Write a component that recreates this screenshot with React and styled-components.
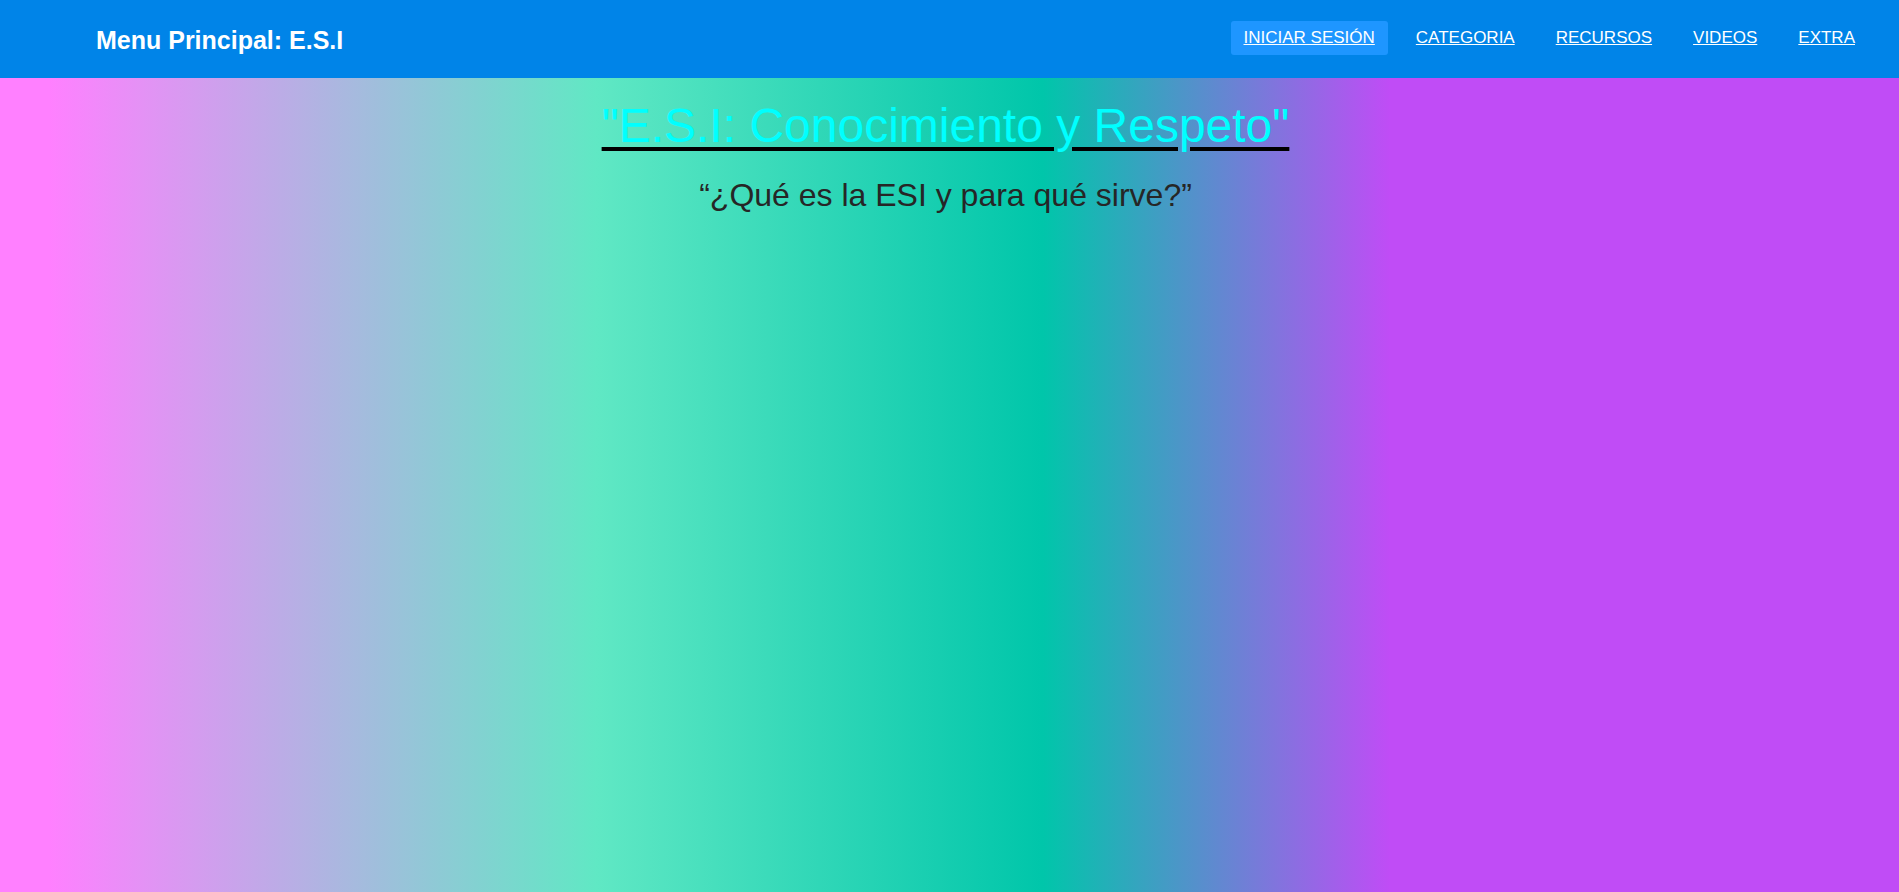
import React from "react";
import styled, { createGlobalStyle } from "styled-components";

const GlobalStyle = createGlobalStyle`
  html, body {
    margin: 0;
    padding: 0;
  }
  html {
    overflow-y: scroll;
  }
  body {
    font-family: "Liberation Sans", Arial, sans-serif;
    background: linear-gradient(
      to right,
      #ff80ff 0%,
      #ff80ff 2.6%,
      #60e8c4 31.4%,
      #00c6aa 54.9%,
      #c04cf6 73.2%,
      #c04cf6 100%
    );
    background-attachment: fixed;
  }
  ::-webkit-scrollbar {
    width: 6px;
  }
  ::-webkit-scrollbar-track {
    background: #fbfbfb;
  }
  ::-webkit-scrollbar-thumb {
    background: #8e8e8e;
    border-radius: 3px;
  }
`;

const links = ["Iniciar sesión", "Categoria", "Recursos", "Videos", "Extra"];

const Header = styled.header`
  height: 78px;
  background: #0084e8;
  display: flex;
  align-items: center;
  justify-content: space-between;
  padding: 0 31px 0 96px;
  box-sizing: border-box;
`;

const Brand = styled.h2`
  margin: 2px 0 0;
  color: #fff;
  font-size: 25px;
  font-weight: bold;
`;

const Nav = styled.nav`
  display: flex;
  align-items: center;
  gap: 15px;
  margin-top: -3px;
`;

const NavLink = styled.a`
  color: #fff;
  font-size: 17px;
  text-transform: uppercase;
  text-decoration: underline;
  padding: 7px 13px;
  border-radius: 3px;
  background: ${({ $active }) => ($active ? "#1e96ff" : "transparent")};
`;

const Main = styled.main`
  min-height: 9000px;
  padding-right: 8px;
  text-align: center;
`;

const Title = styled.h1`
  margin: 20px 0 0;
  font-size: 48px;
  font-weight: normal;
  line-height: normal;
`;

const TitleLink = styled.a`
  color: #00ffff;
  text-decoration: underline;
  text-decoration-color: #000;
  text-decoration-thickness: 4px;
  text-underline-offset: 5px;
`;

const Subtitle = styled.p`
  margin: 24px 0 0;
  font-size: 32px;
  color: #262626;
  line-height: normal;
`;

const App = () => {
  return (
    <>
      <GlobalStyle />
      <Header>
        <Brand>Menu Principal: E.S.I</Brand>
        <Nav>
          {links.map((l, i) => (
            <NavLink key={l} href="#" $active={i === 0}>
              {l}
            </NavLink>
          ))}
        </Nav>
      </Header>
      <Main>
        <Title>
          <TitleLink href="#">"E.S.I: Conocimiento y Respeto"</TitleLink>
        </Title>
        <Subtitle>“¿Qué es la ESI y para qué sirve?”</Subtitle>
      </Main>
    </>
  );
};

export default App;
